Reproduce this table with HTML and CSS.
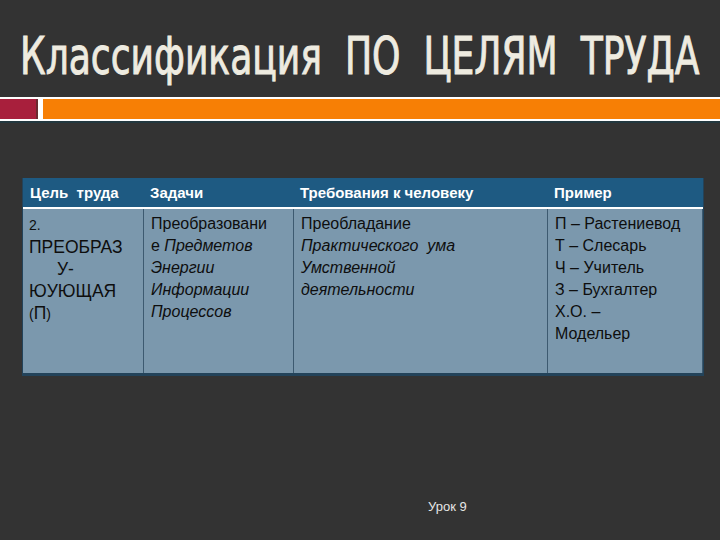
FILE: index.html
```html
<!DOCTYPE html>
<html lang="ru">
<head>
<meta charset="utf-8">
<link rel="stylesheet" href="styles.css">
</head>
<body>
<div class="slide">
  <div class="title-row">
    <h1 class="title">Классификация&nbsp; ПО&nbsp; ЦЕЛЯМ&nbsp; ТРУДА</h1>
  </div>
  <div class="rule">
    <div class="rule-red"></div>
    <div class="rule-orange"></div>
  </div>
  <div class="table-wrap">
    <div class="grid">
      <div class="th c1">Цель&nbsp; труда</div>
      <div class="th c2">Задачи</div>
      <div class="th c3">Требования к человеку</div>
      <div class="th c4">Пример</div>
      <div class="sep"></div>
      <div class="td c1"><span class="small">2.</span><br>ПРЕОБРАЗ<br><span class="indent">У-</span><br>ЮУЮЩАЯ<br><span class="small">(</span>П<span class="small">)</span></div>
      <div class="td c2">Преобразовани<br>е <i>Предметов</i><br><i>Энергии</i><br><i>Информации</i><br><i>Процессов</i></div>
      <div class="td c3">Преобладание<br><i>Практического&nbsp; ума</i><br><i>Умственной</i><br><i>деятельности</i></div>
      <div class="td c4">П – Растениевод<br>Т – Слесарь<br>Ч – Учитель<br>З – Бухгалтер<br>Х.О. –<br>Модельер</div>
    </div>
  </div>
  <div class="footer">Урок 9</div>
</div>
</body>
</html>
```
FILE: styles.css
```css
html, body {
  margin: 0;
  padding: 0;
  background: #333333;
}
.slide {
  width: 720px;
  height: 540px;
  background: #333333;
  display: flex;
  flex-direction: column;
  overflow: hidden;
}
.title-row {
  height: 97px;
  padding: 29px 0 0 20px;
  box-sizing: border-box;
  overflow: visible;
}
.title {
  margin: 0;
  display: inline-block;
  font-family: "DejaVu Sans", sans-serif;
  font-stretch: condensed;
  font-weight: normal;
  font-size: 51px;
  line-height: 56px;
  color: #eeebe0;
  white-space: nowrap;
  -webkit-text-stroke: 0.9px #eeebe0;
  transform: scaleX(0.787);
  transform-origin: left center;
}
.rule {
  height: 20px;
  border-top: 2px solid #ffffff;
  border-bottom: 2px solid #ffffff;
  display: flex;
  box-shadow: 0 2px 0 #23383f;
}
.rule-red {
  width: 36px;
  background: #a81f3c;
  border-right: 2px solid #6a2a30;
}
.rule-orange {
  flex: 1;
  background: #f77f05;
  border-left: 5px solid #ffffff;
}
.table-wrap {
  margin: 57px 0 0 22px;
  width: 682px;
  background: #23435a;
  padding: 0 0 3px 1px;
  box-sizing: border-box;
}
.grid {
  display: grid;
  grid-template-columns: 120px 150px 254px 156px;
  grid-template-rows: 29px 2px 164px;
}
.th {
  background: #1e5a82;
  color: #ffffff;
  font-family: "Liberation Sans", Arial, sans-serif;
  font-weight: bold;
  font-size: 15px;
  line-height: 29px;
  padding-left: 7px;
  white-space: nowrap;
}
.sep {
  grid-column: 1 / 5;
  background: #ffffff;
}
.td {
  background: #7b98ad;
  color: #0e0e0e;
  font-family: "Liberation Sans", Arial, sans-serif;
  font-size: 16px;
  line-height: 22px;
  padding: 4px 0 0 7px;
  white-space: nowrap;
  border-left: 1px solid #3d5a70;
}
.td.c1 {
  border-left: none;
  font-size: 17.5px;
  padding-left: 6px;
}
.td.c4 {
  border-right: 1px solid #3d5a70;
}
.small {
  font-size: 14px;
}
.indent {
  padding-left: 28px;
}
.footer {
  margin: 123px 0 0 428px;
  color: #e6e6e6;
  font-family: "Liberation Sans", Arial, sans-serif;
  font-size: 13px;
}
```
